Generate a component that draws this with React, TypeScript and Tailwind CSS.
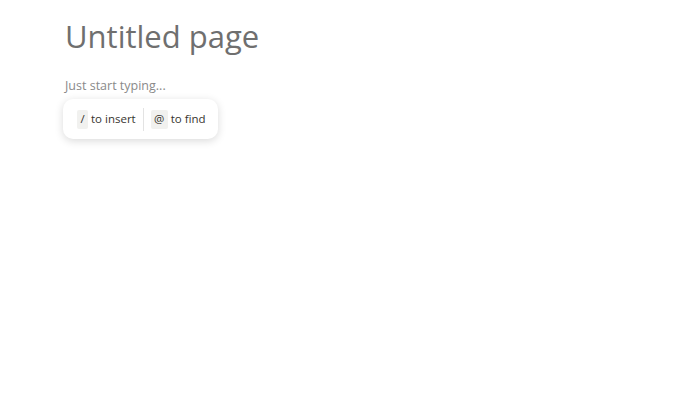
export default function App() {
  return (
    <div className="w-[700px] h-[400px] bg-white font-['Segoe_UI','Open_Sans',sans-serif]">
      <div className="pl-[65px] pt-[14px]">
        <h1 className="text-[31px] leading-[44px] text-[#6f6f6f] font-normal">Untitled page</h1>
        <p className="mt-[19px] text-[12.5px] leading-[18px] text-[#8a8a8a]">Just start typing...</p>
        <div className="mt-[4px] -ml-[2px] inline-flex items-center h-[40px] pl-[14px] pr-[12px] rounded-[10px] bg-white shadow-[0_2px_8px_rgba(0,0,0,0.15)] text-[11.5px] text-[#37352f]">
          <span className="flex items-center justify-center w-[11px] h-[19px] bg-[#f1f1ef] rounded-[2px]">/</span>
          <span className="ml-[3px]">to insert</span>
          <span className="ml-[7px] mr-[7px] w-px h-[23px] bg-[#e3e3e3]" />
          <span className="flex items-center justify-center w-[17px] h-[19px] bg-[#f1f1ef] rounded-[2px]">@</span>
          <span className="ml-[3px]">to find</span>
        </div>
      </div>
    </div>
  );
}
